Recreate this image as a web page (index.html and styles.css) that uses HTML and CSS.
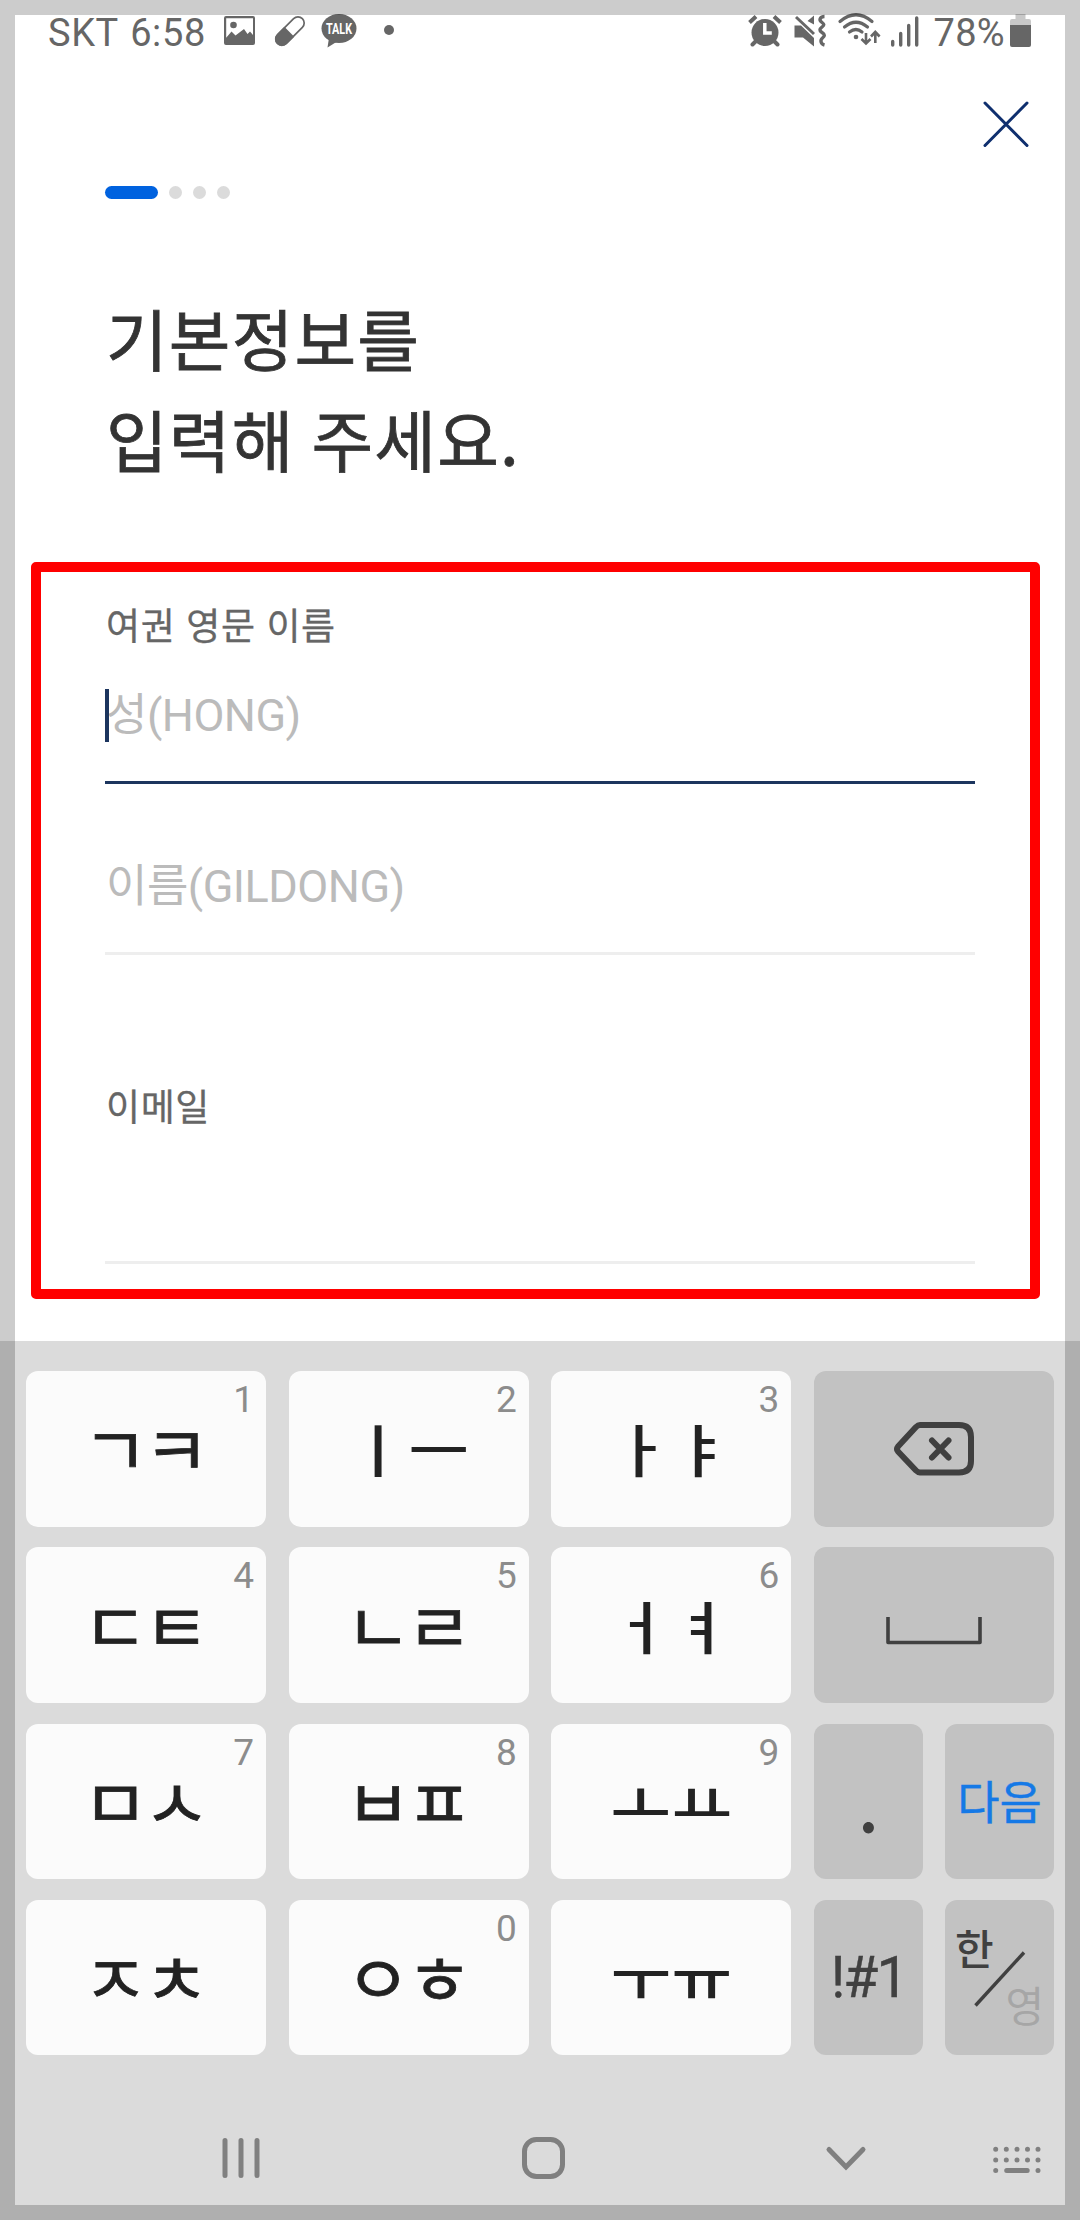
FILE: index.html
```html
<!DOCTYPE html>
<html lang="ko">
<head>
<meta charset="utf-8">
<title>기본정보 입력</title>
<link rel="stylesheet" href="styles.css">
</head>
<body>
<div class="screen">
  <header class="status">
    <span class="carrier">SKT 6:58</span>
    <svg class="st-image" width="31" height="30" viewBox="0 0 31 30"><path fill="#666" fill-rule="evenodd" d="M2 0h27a2 2 0 0 1 2 2v25a2 2 0 0 1-2 2H2a2 2 0 0 1-2-2V2a2 2 0 0 1 2-2zM2.200 2.200v19.500L7.500 15.500l4 4L20 13l3.500 5 2.500-2.500 3 3.500V2.200z"/><circle cx="9.500" cy="9" r="3.300" fill="#666"/></svg>
    <svg class="st-pill" width="32" height="32" viewBox="0 0 32 32"><g transform="rotate(-45 16 16)"><rect x="-1.500" y="9.800" width="35" height="12.400" rx="6.200" fill="none" stroke="#666" stroke-width="1.700"/><path fill="#666" d="M15 9H4.500a7 7 0 0 0 0 14H15z"/></g></svg>
    <svg class="st-talk" width="36" height="34" viewBox="0 0 36 34"><ellipse cx="18" cy="14.500" rx="17.500" ry="14.500" fill="#666"/><path fill="#666" d="M8 24l-1.500 9.500L17 27z"/><text x="18" y="19.500" text-anchor="middle" textLength="26" lengthAdjust="spacingAndGlyphs" class="talk">TALK</text></svg>
    <span class="more-dot"></span>
    <svg class="st-alarm" width="34" height="32" viewBox="0 0 34 32"><circle cx="17" cy="17.500" r="13.500" fill="#666"/><path fill="none" stroke="#666" stroke-width="4" d="M1.500 7.500L8 1.500M26 1.500l6.500 6"/><path fill="none" stroke="#666" stroke-width="4" stroke-linecap="round" d="M8 26l-3.500 3.500M26 26l3.500 3.500"/><path fill="none" stroke="#fff" stroke-width="3.500" d="M16.800 8v10h7"/></svg>
    <svg class="st-mute" width="32" height="32" viewBox="0 0 32 32"><path fill="#666" d="M.5 10.500H7L20 23v8.500L9 22.500H.5zM20 .5v9L13.500 6z"/><path fill="none" stroke="#666" stroke-width="3" d="M2 2l18 17"/><path fill="none" stroke="#666" stroke-width="3.400" d="M30.500 1.500c-4 0-6 3-3 5.500s3 3 .5 5-3 3.500 0 5.500 3 3.500.5 5.500-2 6 2 7"/></svg>
    <svg class="st-wifi" width="42" height="32" viewBox="0 0 42 32"><g fill="none" stroke="#666" stroke-width="3.200" stroke-linecap="round"><path d="M2 7.500Q18-6 34 7.500M6.500 13Q18 3.500 29.500 13M11.500 18Q18 13 24 18"/><path stroke-width="2.600" stroke-linecap="butt" d="M28 19v10M23.500 25l4.500 4.500 4.500-4.500M37.300 29V18M33 22.500l4.300-4.500 4.300 4.500"/></g><circle cx="18" cy="23" r="2.300" fill="#666"/></svg>
    <svg class="st-signal" width="28" height="31" viewBox="0 0 28 31"><path fill="none" stroke="#666" stroke-width="3.400" stroke-linecap="round" d="M1.700 25.500v3.500M9.700 17.500V29M17.700 9.500V29M25.700 2v27"/></svg>
    <span class="percent">78%</span>
    <svg class="st-battery" width="21" height="33" viewBox="0 0 21 33"><path fill="#c8c8c8" d="M5.500 0h10v5H19a2 2 0 0 1 2 2v5H0V7a2 2 0 0 1 2-2h3.500z"/><path fill="#666" d="M0 11h21v20a2 2 0 0 1-2 2H2a2 2 0 0 1-2-2z"/></svg>
  </header>

  <div class="close-row">
    <svg width="48" height="48" viewBox="0 0 48 48"><path fill="none" stroke="#0f2f6e" stroke-width="3" stroke-linecap="round" d="M3 3l42 42.500M45 3L3 45.500"/></svg>
  </div>

  <div class="steps"><i class="step on"></i><i class="step"></i><i class="step"></i><i class="step"></i></div>

  <h1 class="title">기본정보를<br>입력해 주세요.</h1>

  <main class="form">
    <div class="label">여권 영문 이름</div>
    <div class="field active"><i class="caret"></i><span>성(HONG)</span></div>
    <div class="field given"><span>이름(GILDONG)</span></div>
    <div class="label email">이메일</div>
    <div class="field blank"></div>
    <div class="highlight"></div>
  </main>

  <section class="keyboard">
    <div class="keys">
      <div class="key"><b>ㄱㅋ</b><sup>1</sup></div>
      <div class="key vowel"><b>ㅣㅡ</b><sup>2</sup></div>
      <div class="key vowel"><b>ㅏㅑ</b><sup>3</sup></div>
      <div class="key fn"><svg width="82" height="56" viewBox="0 0 82 56"><path fill="none" stroke="#404040" stroke-width="6" stroke-linejoin="round" d="M27 4H66Q78 4 78 16V40Q78 51.500 66 51.500H27Q25 51.500 23 49.500L5 30.500Q3 28 5 25.500L23 6Q25 4 27 4z"/><path stroke="#404040" stroke-width="6" stroke-linecap="round" d="M39 19.500l16.500 17M55.500 19.500L39 36.500"/></svg></div>

      <div class="key"><b>ㄷㅌ</b><sup>4</sup></div>
      <div class="key"><b>ㄴㄹ</b><sup>5</sup></div>
      <div class="key vowel"><b>ㅓㅕ</b><sup>6</sup></div>
      <div class="key fn space"><svg width="96" height="28" viewBox="0 0 96 28"><path fill="none" stroke="#404040" stroke-width="3.600" stroke-linejoin="round" d="M2 0v25.500h92V0"/></svg></div>

      <div class="key"><b>ㅁㅅ</b><sup>7</sup></div>
      <div class="key"><b>ㅂㅍ</b><sup>8</sup></div>
      <div class="key vowel"><b>ㅗㅛ</b><sup>9</sup></div>
      <div class="pair">
        <div class="key fn dot">.</div>
        <div class="key fn next">다음</div>
      </div>

      <div class="key"><b>ㅈㅊ</b></div>
      <div class="key"><b>ㅇㅎ</b><sup>0</sup></div>
      <div class="key vowel"><b>ㅜㅠ</b></div>
      <div class="pair">
        <div class="key fn sym">!#1</div>
        <div class="key fn lang"><span class="ko">한</span><svg width="52" height="56" viewBox="0 0 52 56"><path stroke="#404040" stroke-width="3.400" d="M1.500 54.500L50 1.500"/></svg><span class="en">영</span></div>
      </div>
    </div>
    <nav class="nav">
      <svg class="recents" width="48" height="48" viewBox="0 0 48 48"><path stroke="#808080" stroke-width="5" stroke-linecap="round" d="M8 6.500v35M24 6.500v35M40 6.500v35"/></svg>
      <svg class="home" width="48" height="48" viewBox="0 0 48 48"><rect x="5.500" y="5.500" width="38" height="37" rx="12" fill="none" stroke="#808080" stroke-width="5"/></svg>
      <svg class="back" width="48" height="48" viewBox="0 0 48 48"><path fill="none" stroke="#808080" stroke-width="5" stroke-linecap="round" d="M7 15.500l17 17.500 17-17.500"/></svg>
      <svg class="switch" width="48" height="48" viewBox="0 0 48 48"><path fill="none" stroke="#808080" stroke-width="5" stroke-linecap="round" d="M2.700 15.300h0M13.300 15.300h0M24 15.300h0M34.500 15.300h0M45 15.300h0M2.700 26h0M13.300 26h0M24 26h0M34.500 26h0M45 26h0M2.700 36.600h0M13.700 36.600h20.500M45 36.600h0"/></svg>
    </nav>
  </section>
  <div class="edge"></div>
</div>
</body>
</html>
```
FILE: styles.css
```css
* { box-sizing: border-box; }
body { margin: 0; background: #fff; }
svg { display: block; flex: none; overflow: visible; }

.screen {
  position: relative;
  display: flex;
  flex-direction: column;
  width: 1080px;
  height: 2220px;
  overflow: hidden;
  font-family: Roboto, "Noto Sans CJK KR", sans-serif;
  background: #fff;
}
.edge {
  position: absolute;
  inset: 0;
  border: 15px solid rgba(0, 0, 0, .2);
  pointer-events: none;
}

.status {
  display: flex;
  align-items: flex-start;
  height: 64px;
  padding: 14px 49px 0 48px;
  color: #666;
  font-size: 38px;
  line-height: 38px;
}
.carrier { flex: none; width: 175.500px; white-space: nowrap; letter-spacing: .6px; word-spacing: 2px; }
.st-image { margin-top: 2px; }
.st-pill { margin: 1px 0 0 19px; }
.st-talk { margin-left: 15.500px; }
.talk { font: 700 14px Roboto, sans-serif; fill: #fff; }
.more-dot { flex: none; width: 10px; height: 10px; margin: 11px 0 0 27px; border-radius: 50%; background: #666; }
.st-alarm { margin: 1px 0 0 auto; }
.st-mute { margin: 1px 0 0 12px; }
.st-wifi { margin-left: 12px; }
.st-signal { margin: 2px 0 0 11px; }
.percent { flex: none; width: 76.500px; margin-left: 14.500px; white-space: nowrap; letter-spacing: .3px; }

.close-row { display: flex; justify-content: flex-end; height: 122px; padding: 36px 50px 0 0; }
.steps { display: flex; gap: 11px; height: 13px; margin-left: 105px; }
.step { width: 13px; height: 13px; border-radius: 7px; background: #dbdbdb; }
.step.on { width: 53px; background: #0062df; }

.title {
  margin: 87px 0 0 106px;
  height: 206px;
  color: #333;
  font: 400 67px/101px "Noto Sans CJK KR", sans-serif;
  letter-spacing: 1.200px;
  word-spacing: -3px;
  -webkit-text-stroke: .8px #333;
}

.form { position: relative; height: 849px; padding: 108px 105px 0; }
.label {
  height: 48px;
  padding-left: 1px;
  color: #666;
  font: 400 37px/48px "Noto Sans CJK KR", sans-serif;
  letter-spacing: .6px;
  -webkit-text-stroke: .3px #666;
}
.field {
  display: flex;
  align-items: flex-start;
  padding-left: 1px;
  border-bottom: 3px solid #eee;
  color: #bbb;
  font-size: 45px;
  line-height: 60px;
  letter-spacing: -.5px;
}
.active { position: relative; height: 136px; padding-top: 38px; border-color: #1c355e; }
.caret { position: absolute; left: 0; top: 41px; width: 4px; height: 53px; background: #1c355e; }
.given { height: 171px; padding-top: 73px; }
.email { margin-top: 126px; }
.blank { height: 135px; }
.highlight {
  position: absolute;
  left: 31px;
  top: 70px;
  width: 1009px;
  height: 737px;
  border: 10px solid #f00;
  border-radius: 5px;
}

.keyboard { height: 879px; padding: 30px 26px 0; background: #dbdbdb; }
.keys {
  display: grid;
  grid-template-columns: repeat(4, 240px);
  grid-template-rows: repeat(4, 155.500px);
  column-gap: 22.700px;
  row-gap: 20.800px;
}
.key {
  position: relative;
  display: flex;
  align-items: center;
  justify-content: center;
  border-radius: 12px;
  background: #fbfbfb;
  color: #222;
}
.key b {
  margin: 0 5px 3px 0;
  font: 400 72px/80px "Noto Sans CJK KR", sans-serif;
  letter-spacing: -5px;
  transform: scaleY(.95);
  -webkit-text-stroke: .8px #222;
}
.vowel b {
  margin: 0 0 1px;
  font-size: 61px;
  font-weight: 500;
  letter-spacing: .5px;
  transform: scale(1.08, .94);
  -webkit-text-stroke: 0;
}
.key sup {
  position: absolute;
  right: 12px;
  top: 9px;
  color: #8c8c8c;
  font-size: 37px;
  line-height: 40px;
}
.fn { background: #c2c2c2; color: #404040; }
.space { padding-top: 12px; }
.pair { display: grid; grid-template-columns: 109px 109px; gap: 22px; }
.dot { padding-bottom: 5px; font: 400 82px/82px "Noto Sans CJK KR", sans-serif; }
.next { padding-bottom: 4px; color: #1579e6; font-size: 46px; -webkit-text-stroke: .4px #1579e6; }
.sym { font-size: 57px; letter-spacing: -2px; -webkit-text-stroke: .4px #404040; }
.lang svg { margin-top: 2px; }
.lang span { position: absolute; font: 500 42px/44px "Noto Sans CJK KR", sans-serif; }
.ko { left: 10px; top: 25px; }
.lang .en { right: 10px; bottom: 29px; color: #a6a6a6; font-weight: 400; }

.nav { display: flex; margin-top: 79px; padding-left: 191px; }
.home { margin-left: 254px; }
.back { margin-left: 255px; }
.switch { margin-left: 123px; }
```
